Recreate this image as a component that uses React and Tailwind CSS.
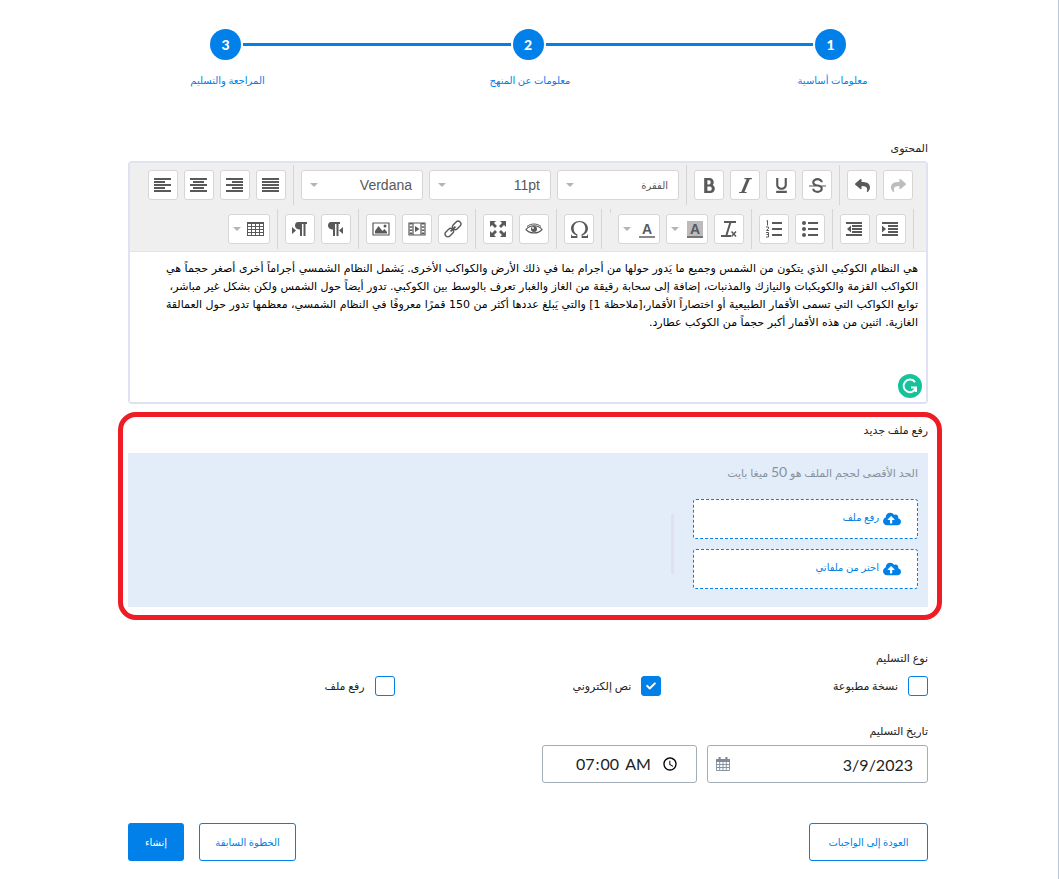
import React, { useState } from "react";
import { ImBold, ImItalic, ImUnderline, ImStrikethrough, ImOmega } from "react-icons/im";
import { FaReply, FaShare, FaCheck, FaCloudUploadAlt } from "react-icons/fa";

const CONTENT = [
  "هي النظام الكوكبي الذي يتكون من الشمس وجميع ما يَدور حولها من أجرام بما في ذلك الأرض والكواكب الأخرى. يَشمل النظام الشمسي أجراماً أخرى أصغر حجماً هي",
  "الكواكب القزمة والكويكبات والنيازك والمذنبات، إضافة إلى سحابة رقيقة من الغاز والغبار تعرف بالوسط بين الكوكبي. تدور أيضاً حول الشمس ولكن بشكل غير مباشر،",
  "توابع الكواكب التي تسمى الأقمار الطبيعية أو اختصاراً الأقمار،[ملاحظة 1] والتي يَبلغ عددها أكثر من 150 قمرًا معروفًا في النظام الشمسي، معظمها تدور حول العمالقة",
  "الغازية. اثنين من هذه الأقمار أكبر حجماً من الكوكب عطارد.",
].join("\n");

const STEPS = ["معلومات أساسية", "معلومات عن المنهج", "المراجعة والتسليم"];

const Svg = ({ children }) => (
  <svg
    width="18"
    height="18"
    viewBox="0 0 18 18"
    fill="none"
    stroke="currentColor"
    className="shrink-0"
    aria-hidden="true"
  >
    {children}
  </svg>
);

const AlignLeftIcon = () => (
  <Svg>
    <path strokeWidth="2" d="M0 3h17M0 6h11M0 9h17M0 12h11M0 15h17" />
  </Svg>
);

const AlignCenterIcon = () => (
  <Svg>
    <path strokeWidth="2" d="M0 3h17M3 6h11M0 9h17M3 12h11M0 15h17" />
  </Svg>
);

const AlignRightIcon = () => (
  <Svg>
    <path strokeWidth="2" d="M0 3h17M6 6h11M0 9h17M6 12h11M0 15h17" />
  </Svg>
);

const JustifyIcon = () => (
  <Svg>
    <path strokeWidth="2" d="M0 3h17M0 6h17M0 9h17M0 12h17M0 15h17" />
  </Svg>
);

const OutdentIcon = () => (
  <Svg>
    <path strokeWidth="2" d="M0 3h16M6 6h10M6 9h10M6 12h10M0 15h16" />
    <path fill="currentColor" stroke="none" d="M5 5.500v7L1 9z" />
  </Svg>
);

const IndentIcon = () => (
  <Svg>
    <path strokeWidth="2" d="M0 3h16M6 6h10M6 9h10M6 12h10M0 15h16" />
    <path fill="currentColor" stroke="none" d="M0 5.500v7L4 9z" />
  </Svg>
);

const LtrIcon = () => (
  <Svg>
    <path fill="currentColor" stroke="none" d="M7 2h9v2h-1.500v12h-2V4H11v12H9v-6.500C6.500 9.500 4 8 4 5.700S5 2 7 2zM1 7L5 10.500l-4 3.500z" />
  </Svg>
);

const RtlIcon = () => (
  <Svg>
    <path fill="currentColor" stroke="none" d="M4 2h9v2h-1.500v12h-2V4H8v12H6v-6.500C3.500 9.500 1 8 1 5.700S2 2 4 2zM16 7l-4 3.500 4 3.500z" />
  </Svg>
);

const TableIcon = () => (
  <Svg>
    <path shapeRendering="crispEdges" d="M.5 2.500h16v13h-16zM4.500 3v12M8.500 3v12M12.500 3v12M1 6.500h15M1 9.500h15M1 12.500h15M0 3.500h17" />
  </Svg>
);

const ImageIcon = () => (
  <Svg>
    <path strokeWidth="1.200" d="M1 3h16v12H1z" />
    <path fill="currentColor" stroke="none" d="M3 13.500V11l3.500-5 4 5 2-2 2.500 3v1.500z" />
    <circle cx="13" cy="6" r="1.500" fill="currentColor" stroke="none" />
  </Svg>
);

const FilmIcon = () => (
  <Svg>
    <path strokeWidth="1.200" d="M1 3h16v12H1zM5 3v12M13 3v12" />
    <path strokeWidth="2.500" strokeDasharray="1.600 1.600" d="M3 3v12M15 3v12" />
    <path fill="currentColor" stroke="none" d="M7 6l4.500 3L7 12z" />
  </Svg>
);

const LinkIcon = () => (
  <Svg>
    <g strokeWidth="1.400" transform="rotate(-45 9 9)">
      <rect x="-1" y="6.200" width="9.500" height="5.600" rx="2.800" />
      <rect x="9.500" y="6.200" width="9.500" height="5.600" rx="2.800" />
      <path strokeWidth="1.800" d="M5.500 9h7" />
    </g>
  </Svg>
);

const FullscreenIcon = () => (
  <Svg>
    <path
      fill="currentColor"
      stroke="none"
      d="M1 1h6L5 3l3 3-2 2-3-3-2 2zM17 1v6l-2-2-3 3-2-2 3-3-2-2zM1 17v-6l2 2 3-3 2 2-3 3 2 2zM17 17h-6l2-2-3-3 2-2 3 3 2-2z"
    />
  </Svg>
);

const EyeIcon = () => (
  <Svg>
    <path strokeWidth="1.200" d="M1 9.500c3.800-5 12.200-5 16 0-3.800 4.600-12.200 4.600-16 0z" />
    <path strokeWidth="1" d="M2 6.500c4-3.300 10-3.300 14 0" />
    <circle cx="9" cy="9" r="3" fill="currentColor" stroke="none" />
    <circle cx="8" cy="8" r="1" fill="white" stroke="none" />
  </Svg>
);

const ClearIcon = () => (
  <Svg>
    <path strokeWidth="2" d="M4 2h12M1 16h10" />
    <path strokeWidth="2" d="M10.500 2L6.500 15" />
    <path strokeWidth="1.500" d="M11.500 11.500l4.500 5M16 11.500l-4.500 5" />
  </Svg>
);

const NumberedIcon = () => (
  <Svg>
    <path strokeWidth="2" d="M7 3h10M7 9h10M7 15h10" />
    <path strokeWidth="1" d="M2.500 5.500v-5l-1 .5M1 7h2.500v1.500L1.500 10.500h2.500M1 12.500h2.500v4.500H1M1.500 14.500h2" />
  </Svg>
);

const BulletsIcon = () => (
  <Svg>
    <path strokeWidth="2" d="M7 3h10M7 9h10M7 15h10" />
    <g fill="currentColor" stroke="none">
      <circle cx="3" cy="3" r="2" />
      <circle cx="3" cy="9" r="2" />
      <circle cx="3" cy="15" r="2" />
    </g>
  </Svg>
);

const CalendarIcon = () => (
  <svg width="14" height="14" viewBox="0 0 14 14" fill="none" stroke="currentColor" aria-hidden="true">
    <path fill="currentColor" stroke="none" d="M0 2h14v3H0zM2.500 0h2.200v3H2.500zM9.300 0h2.200v3H9.300z" />
    <path strokeWidth="0.900" d="M.5 4.500h13v9H.5zM3.700 5v8.500M7 5v8.500M10.300 5v8.500M.5 7.500h13M.5 10.500h13" />
  </svg>
);

const GrammarIcon = () => (
  <svg width="24" height="24" viewBox="0 0 24 24" fill="none" aria-hidden="true">
    <circle cx="12" cy="12" r="12" fill="#15c39a" />
    <path stroke="white" strokeWidth="2" d="M17 8.200A6.300 6.300 0 1 0 18 13.500M13 13.500h5v4.500" />
  </svg>
);

const Caret = () => (
  <svg width="8" height="4" viewBox="0 0 8 4" fill="#b0b5bb" aria-hidden="true">
    <path d="M0 0h8L4 4z" />
  </svg>
);

const ToolButton = ({ label, children, disabled }) => (
  <button
    type="button"
    aria-label={label}
    disabled={disabled}
    className="flex h-[30px] w-[30px] items-center justify-center rounded-[3px] border border-[#d6d6d6] bg-white text-[#595959] disabled:text-[#bdbdbd]"
  >
    {children}
  </button>
);

const SplitButton = ({ label, children }) => (
  <button
    type="button"
    aria-label={label}
    className="flex h-[30px] w-[42px] items-center justify-between rounded-[3px] border border-[#d6d6d6] bg-white px-1 text-[#595959]"
  >
    {children}
    <Caret />
  </button>
);

const ToolSelect = ({ label, options, className = "text-sm" }) => (
  <div className="relative w-[122px]">
    <select
      aria-label={label}
      className={`h-[30px] w-full appearance-none rounded-[3px] border border-[#d6d6d6] bg-white pr-2.5 pl-6 text-right font-['Liberation_Sans','DejaVu_Sans',sans-serif] text-[#595959] ${className}`}
    >
      {options.map((option) => (
        <option key={option}>{option}</option>
      ))}
    </select>
    <span className="pointer-events-none absolute top-[13px] left-[9px]">
      <Caret />
    </span>
  </div>
);

const Group = ({ children }) => <div className="flex items-center gap-1.5 px-[7px]">{children}</div>;

const Separator = () => <div className="h-10 w-px bg-[#d5d5d5]" />;

const Toolbar = () => (
  <div className="border-b border-[#e2e4e7] bg-[#efefef] py-0.5 pr-[6px] text-base">
    <div className="flex items-center">
      <Group>
        <ToolButton label="إعادة" disabled>
          <FaShare size={15} />
        </ToolButton>
        <ToolButton label="تراجع">
          <FaReply size={15} />
        </ToolButton>
      </Group>
      <Separator />
      <Group>
        <ToolButton label="يتوسطه خط">
          <ImStrikethrough size={17} />
        </ToolButton>
        <ToolButton label="تسطير">
          <ImUnderline size={17} />
        </ToolButton>
        <ToolButton label="مائل">
          <ImItalic size={17} />
        </ToolButton>
        <ToolButton label="غامق">
          <ImBold size={17} />
        </ToolButton>
      </Group>
      <Separator />
      <Group>
        <ToolSelect label="التنسيق" options={["الفقرة"]} className="text-[10px]" />
        <ToolSelect label="حجم الخط" options={["11pt"]} />
        <ToolSelect label="نوع الخط" options={["Verdana"]} />
      </Group>
      <Separator />
      <Group>
        <ToolButton label="ضبط">
          <JustifyIcon />
        </ToolButton>
        <ToolButton label="محاذاة لليمين">
          <AlignRightIcon />
        </ToolButton>
        <ToolButton label="توسيط">
          <AlignCenterIcon />
        </ToolButton>
        <ToolButton label="محاذاة لليسار">
          <AlignLeftIcon />
        </ToolButton>
      </Group>
    </div>
    <div className="mt-1 flex items-center pr-[6px]">
      <Separator />
      <Group>
        <ToolButton label="زيادة المسافة البادئة">
          <IndentIcon />
        </ToolButton>
        <ToolButton label="إنقاص المسافة البادئة">
          <OutdentIcon />
        </ToolButton>
      </Group>
      <Separator />
      <Group>
        <ToolButton label="قائمة نقطية">
          <BulletsIcon />
        </ToolButton>
        <ToolButton label="قائمة رقمية">
          <NumberedIcon />
        </ToolButton>
      </Group>
      <Separator />
      <Group>
        <ToolButton label="مسح التنسيق">
          <ClearIcon />
        </ToolButton>
        <SplitButton label="لون الخلفية">
          <span className="h-[17px] w-4 border-b-2 border-[#777777] bg-[#bbbbbb] text-center font-['Liberation_Sans',sans-serif] text-sm leading-4 font-bold">
            A
          </span>
        </SplitButton>
        <SplitButton label="لون النص">
          <span className="h-[17px] w-4 border-b-2 border-[#888888] text-center font-['Liberation_Sans',sans-serif] text-sm leading-4 font-bold">
            A
          </span>
        </SplitButton>
      </Group>
      <div className="h-1 w-px self-start bg-[#d5d5d5]" />
      <div className="w-2" />
      <Separator />
      <Group>
        <ToolButton label="رموز خاصة">
          <ImOmega size={17} />
        </ToolButton>
      </Group>
      <Separator />
      <Group>
        <ToolButton label="معاينة">
          <EyeIcon />
        </ToolButton>
        <ToolButton label="ملء الشاشة">
          <FullscreenIcon />
        </ToolButton>
      </Group>
      <Separator />
      <Group>
        <ToolButton label="رابط">
          <LinkIcon />
        </ToolButton>
        <ToolButton label="فيديو">
          <FilmIcon />
        </ToolButton>
        <ToolButton label="صورة">
          <ImageIcon />
        </ToolButton>
      </Group>
      <Separator />
      <Group>
        <ToolButton label="من اليمين لليسار">
          <RtlIcon />
        </ToolButton>
        <ToolButton label="من اليسار لليمين">
          <LtrIcon />
        </ToolButton>
      </Group>
      <Separator />
      <Group>
        <SplitButton label="جدول">
          <TableIcon />
        </SplitButton>
      </Group>
    </div>
  </div>
);

const Stepper = () => (
  <ol className="flex items-start px-[82px]">
    {STEPS.map((step, index) => (
      <React.Fragment key={step}>
        {index > 0 && <li aria-hidden="true" className="mx-0.5 mt-3.5 h-[3px] flex-1 bg-[#0080e8]" />}
        <li className="flex w-[31px] flex-col items-center">
          <span className="flex size-[31px] shrink-0 items-center justify-center rounded-full bg-[#0080e8] text-sm font-black text-white">
            {index + 1}
          </span>
          <span className="mt-2.5 pl-1 text-[10px] leading-5 whitespace-nowrap text-[#0080e8]">{step}</span>
        </li>
      </React.Fragment>
    ))}
  </ol>
);

const UploadButton = ({ children }) => (
  <button
    type="button"
    className="flex h-10 w-full items-center gap-1 rounded-[3px] border border-dashed border-[#0080e8] bg-white pr-4 text-[10px] text-[#0080e8]"
  >
    <FaCloudUploadAlt size={18} />
    <span className="pb-1 leading-5">{children}</span>
  </button>
);

const Checkbox = ({ label, defaultChecked = false }) => {
  const [checked, setChecked] = useState(defaultChecked);
  return (
    <label className="flex items-center gap-2.5">
      <span className="relative size-5">
        <input
          type="checkbox"
          checked={checked}
          onChange={(e) => setChecked(e.target.checked)}
          className="block size-5 appearance-none rounded-[3px] border border-[#0080e8] bg-white checked:bg-[#0080e8]"
        />
        {checked && <FaCheck size={10} className="pointer-events-none absolute top-[5px] left-[5px] text-white" />}
      </span>
      {label}
    </label>
  );
};

const App = () => {
  return (
    <div
      dir="rtl"
      lang="ar"
      className="min-h-screen border-r border-[#b8c7dc] bg-white pt-[29px] pr-[130px] pb-[18px] pl-32 font-[Lato,'DejaVu_Sans',sans-serif] text-[11px] leading-5 text-[#222222]"
    >
      <Stepper />

      <label htmlFor="content" className="mt-12 block">
        المحتوى
      </label>
      <div className="relative mt-[3px] rounded-[4px] border-2 border-[#dfe3f1]">
        <Toolbar />
        <textarea
          id="content"
          defaultValue={CONTENT}
          className="block h-[150px] w-full resize-none bg-white px-2 py-2 font-['DejaVu_Sans',sans-serif] text-[11px] leading-[18px] text-black outline-none"
        />
        <span className="absolute right-1 bottom-1">
          <GrammarIcon />
        </span>
      </div>

      <section className="mt-2 -mr-3.5 -ml-2.5 rounded-[18px] border-[5px] border-[#ee1c25] pt-[3px] pr-[9px] pb-2 pl-[5px]">
        <h2>رفع ملف جديد</h2>
        <div className="mt-[13px] bg-[#e2edf9] px-2.5 pt-[9px] pb-[18px]">
          <p className="h-5 text-[#8792a0]">
            الحد الأقصى لحجم الملف هو <span className="text-sm leading-5">50</span> ميغا بايت
          </p>
          <div className="mt-[17px] flex items-center gap-[19px]">
            <div className="flex w-[225px] flex-col gap-2.5">
              <UploadButton>رفع ملف</UploadButton>
              <UploadButton>اختر من ملفاتي</UploadButton>
            </div>
            <div className="h-[60px] w-[3px] bg-[#dfe1ee]" />
          </div>
        </div>
      </section>

      <fieldset className="mt-7">
        <legend>نوع التسليم</legend>
        <div className="mt-2 grid grid-cols-3">
          <Checkbox label="نسخة مطبوعة" />
          <Checkbox label="نص إلكتروني" defaultChecked />
          <Checkbox label="رفع ملف" />
        </div>
      </fieldset>

      <label htmlFor="date" className="mt-[25px] block">
        تاريخ التسليم
      </label>
      <div className="mt-1 flex gap-2.5">
        <div className="relative w-[221px]">
          <input
            id="date"
            type="text"
            dir="ltr"
            defaultValue="3/9/2023"
            className="h-[38px] w-full rounded-[3px] border border-[#a3adb8] pr-3.5 pl-8 text-right text-base"
          />
          <span className="pointer-events-none absolute top-3 left-[9px] text-[#7f8b99]">
            <CalendarIcon />
          </span>
        </div>
        <input
          type="time"
          dir="ltr"
          aria-label="وقت التسليم"
          defaultValue="07:00"
          className="h-[38px] w-[155px] rounded-[3px] border border-[#a3adb8] pr-3.5 pl-8 text-base"
        />
      </div>

      <div className="mt-10 flex gap-[15px] text-[10px]">
        <button type="button" className="h-[38px] w-[119px] rounded-[3px] border border-[#0080e8] text-[#0080e8]">
          العودة إلى الواجبات
        </button>
        <button
          type="button"
          className="mr-auto h-[38px] w-[97px] rounded-[3px] border border-[#0080e8] text-[#0080e8]"
        >
          الخطوة السابقة
        </button>
        <button type="button" className="h-[38px] w-14 rounded-[3px] bg-[#0080e8] text-white">
          إنشاء
        </button>
      </div>
    </div>
  );
};

export default App;
